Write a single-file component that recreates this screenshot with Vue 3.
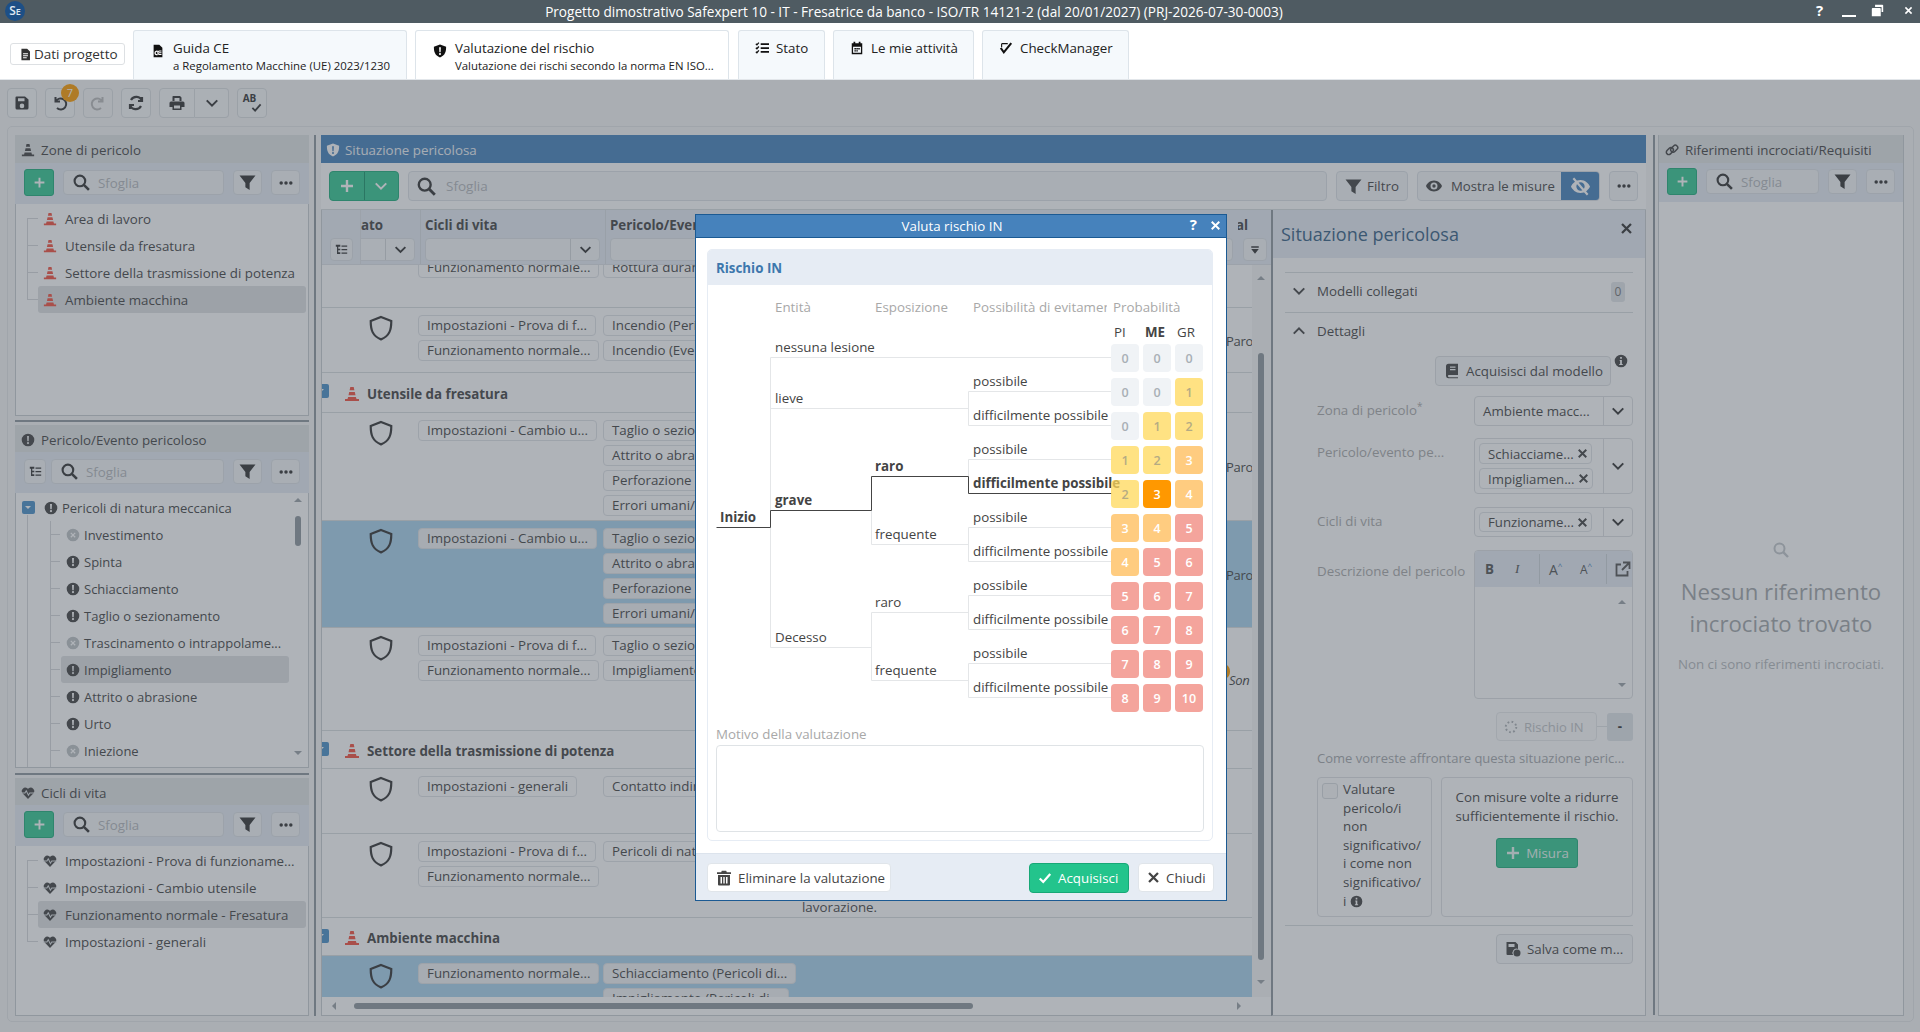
<template>
  <div class="app">
    <svg class="sprite" aria-hidden="true">
      <symbol id="i-save" viewBox="0 0 16 16"><path fill-rule="evenodd" d="M2.500 1.500H11l3.500 3V13a1.500 1.500 0 0 1-1.500 1.500H3A1.500 1.500 0 0 1 1.500 13V2.500a1 1 0 0 1 1-1zM4 3.200v3h6.500v-3zM8 8.600a2.300 2.300 0 1 0 0 4.600 2.300 2.300 0 0 0 0-4.600z" /></symbol>
      <symbol id="i-undo" viewBox="0 0 16 16"><path fill="none" stroke="currentColor" stroke-width="2" d="M3.500 2v4.500H8M3.800 6.500A5.500 5.500 0 1 1 5 13" /></symbol>
      <symbol id="i-redo" viewBox="0 0 16 16"><path fill="none" stroke="currentColor" stroke-width="2" d="M12.500 2v4.500H8M12.200 6.500A5.500 5.500 0 1 0 11 13" /></symbol>
      <symbol id="i-sync" viewBox="0 0 16 16"><path fill="none" stroke="currentColor" stroke-width="2.200" d="M14 2v4h-4M14 6A6 6 0 0 0 3 5M2 14v-4h4M2 10a6 6 0 0 0 11 1" /></symbol>
      <symbol id="i-print" viewBox="0 0 16 16"><path fill-rule="evenodd" d="M4 1h7l1.500 1.500V6h-2V3H5.500v3H3.500V1.500zM2 6.500h12A1.500 1.500 0 0 1 15.500 8v4H12.500v3h-9v-3H.5V8A1.500 1.500 0 0 1 2 6.500zM5 10.500V13.500h6V10.500z" /></symbol>
      <symbol id="i-chev" viewBox="0 0 16 16"><path fill="none" stroke="currentColor" stroke-width="2.300" d="M2 5l6 6 6-6" /></symbol>
      <symbol id="i-chevup" viewBox="0 0 16 16"><path fill="none" stroke="currentColor" stroke-width="2.300" d="M2 11l6-6 6 6" /></symbol>
      <symbol id="i-check" viewBox="0 0 16 16"><path fill="none" stroke="currentColor" stroke-width="2.600" d="M2 8.500l4 4 8-9" /></symbol>
      <symbol id="i-funnel" viewBox="0 0 16 16"><path d="M.5 1.500h15L10 8.500V15l-4-2.500V8.500z" /></symbol>
      <symbol id="i-sort" viewBox="0 0 16 16"><path d="M2 2h12v2.500H2zM2 6.500h12L8 14z" /></symbol>
      <symbol id="i-search" viewBox="0 0 16 16"><circle cx="6.500" cy="6.500" r="5" fill="none" stroke="currentColor" stroke-width="2" /><path stroke="currentColor" stroke-width="2.400" d="M10.200 10.200l4.800 4.800" /></symbol>
      <symbol id="i-dots" viewBox="0 0 16 16"><circle cx="2.500" cy="8" r="2" /><circle cx="8" cy="8" r="2" /><circle cx="13.500" cy="8" r="2" /></symbol>
      <symbol id="i-plus" viewBox="0 0 16 16"><path stroke="currentColor" stroke-width="2.400" d="M8 2v12M2 8h12" /></symbol>
      <symbol id="i-tree" viewBox="0 0 16 16"><path d="M1 2h5.500v2.500H4V7h2.500v2H4v2.500h2.500v2H2.500V4.500H1zM8 3h7v1.500H8zM8 7.300h7v1.500H8zM8 11.600h7v1.500H8z" /></symbol>
      <symbol id="i-cone" viewBox="0 0 16 16"><path d="M6.300 1h3.400l.7 3.300H5.600zM5.200 6h5.600l.7 3.200h-7zM4.100 10.900h7.800l.6 2.100H15v2H1v-2h2.500z" /></symbol>
      <symbol id="i-haz" viewBox="0 0 16 16"><path fill-rule="evenodd" d="M8 .8a7.200 7.200 0 1 0 0 14.400A7.200 7.200 0 0 0 8 .8zM6.900 3.500h2.200l-.3 5.800H7.200zM8 10.200a1.300 1.300 0 1 1 0 2.600 1.300 1.300 0 0 1 0-2.600z" /></symbol>
      <symbol id="i-hazx" viewBox="0 0 16 16"><path fill-rule="evenodd" d="M8 .8a7.200 7.200 0 1 0 0 14.400A7.200 7.200 0 0 0 8 .8zM6 5l2 2 2-2 1 1-2 2 2 2-1 1-2-2-2 2-1-1 2-2-2-2z" /></symbol>
      <symbol id="i-heart" viewBox="0 0 16 16"><path d="M8 14.800 1.700 8.300A4 4 0 0 1 7.300 2.700L8 3.400l.7-.7a4 4 0 0 1 5.600 5.600z" /><path fill="none" stroke="#dfe3e6" stroke-width="1.200" d="M0 8h4.500l1.500-2.500L8.500 10.500 10 8h6" /></symbol>
      <symbol id="i-shield" viewBox="0 0 24 24"><path fill="none" stroke="currentColor" stroke-width="2" d="M12 1.800 21.500 5.500c0 8-1.500 13.800-9.500 17-8-3.200-9.500-9-9.500-17z" /></symbol>
      <symbol id="i-shieldx" viewBox="0 0 16 16"><path fill-rule="evenodd" d="M8 .5 15 3.200c0 5.500-1 9.800-7 12.300C2 13 1 8.700 1 3.200zM7 3.800h2l-.3 5.500H7.300zM8 10.200a1.200 1.200 0 1 1 0 2.400 1.200 1.200 0 0 1 0-2.400z" /></symbol>
      <symbol id="i-doc" viewBox="0 0 16 16"><path fill-rule="evenodd" d="M3 .8h7l3.500 3.500V15H3zM5 6.500v1.200h6V6.500zM5 9v1.200h6V9zM5 11.500v1.200h4.500v-1.200z" /></symbol>
      <symbol id="i-ce" viewBox="0 0 16 16"><path d="M3 .8h6.500l3.500 3.500V15.200H3z" /><path fill="none" stroke="#fff" stroke-width="1.400" d="M7.500 8.400a2 2 0 1 0 0 3.600M12 8H9.800a2 2 0 0 0 0 4H12M9 10h3" /></symbol>
      <symbol id="i-tasks" viewBox="0 0 16 16"><path d="M6.500 2.500H16v2H6.500zM6.500 7H16v2H6.500zM6.500 11.500H16v2H6.500z" /><path fill="none" stroke="currentColor" stroke-width="1.500" d="M1 3.200l1.200 1.200 2.200-2.600M1 7.700l1.200 1.200 2.200-2.600M1 12.200l1.200 1.200 2.200-2.600" /></symbol>
      <symbol id="i-cal" viewBox="0 0 16 16"><path fill-rule="evenodd" d="M4 .8h2V2.500h4V.8h2V2.500h2V15H2V2.500h2zM3.500 6.500V13.500h9V6.500zM5 8h1.800v1.600H5zM7.200 8H9v1.600H7.200zM9.400 8h1.800v1.600H9.400zM5 10.500h1.800v1.600H5zM7.200 10.500H9v1.600H7.200z" /></symbol>
      <symbol id="i-cm" viewBox="0 0 16 16"><path fill="none" stroke="currentColor" stroke-width="2.400" d="M2 8l3.500 5L14 2.500" /><path fill="none" stroke="currentColor" stroke-width="1.300" d="M3 3h7M3 3v4" /></symbol>
      <symbol id="i-eye" viewBox="0 0 16 16"><path fill-rule="evenodd" d="M8 2.500C4 2.500 1 5.500 0 8c1 2.500 4 5.500 8 5.500s7-3 8-5.500c-1-2.500-4-5.500-8-5.500zM8 4.500a3.500 3.500 0 1 1 0 7 3.500 3.500 0 0 1 0-7zM8 6.300a1.700 1.700 0 1 0 0 3.400 1.700 1.700 0 0 0 0-3.400z" /></symbol>
      <symbol id="i-eyex" viewBox="0 0 16 16"><path fill-rule="evenodd" d="M8 2.500C4 2.500 1 5.500 0 8c1 2.500 4 5.500 8 5.500s7-3 8-5.500c-1-2.500-4-5.500-8-5.500zM8 4.500a3.500 3.500 0 1 1 0 7 3.500 3.500 0 0 1 0-7z" /><path stroke="currentColor" stroke-width="1.800" d="M2 1l12 14" /></symbol>
      <symbol id="i-link" viewBox="0 0 16 16"><g fill="none" stroke="currentColor" stroke-width="1.700"><rect x="1" y="6.500" width="9" height="5.500" rx="2.700" transform="rotate(-45 5.500 9.200)" /><rect x="6" y="3.800" width="9" height="5.500" rx="2.700" transform="rotate(-45 10.500 6.500)" /></g></symbol>
      <symbol id="i-book" viewBox="0 0 16 16"><path fill-rule="evenodd" d="M4.500 .8H14V12H5a1 1 0 0 0 0 2.200h9v1H4.500A2.500 2.500 0 0 1 2 13V3.300A2.500 2.500 0 0 1 4.500 .8zM6 3.500v1.200h5.500V3.500zM6 6v1.200h5.500V6z" /></symbol>
      <symbol id="i-info" viewBox="0 0 16 16"><path fill-rule="evenodd" d="M8 .8a7.200 7.200 0 1 0 0 14.400A7.200 7.200 0 0 0 8 .8zM7 3.500h2v2H7zM6.500 6.800H9v4.500h1v1.200H6v-1.200h1V8H6.500z" /></symbol>
      <symbol id="i-trash" viewBox="0 0 16 16"><path fill-rule="evenodd" d="M5.800 .8h4.400l.6 1.400H15V4H1V2.200h4.200zM2 5h12v9.500a1 1 0 0 1-1 1H3a1 1 0 0 1-1-1zM4.500 7v6.500H6V7zM7.300 7v6.500h1.400V7zM10 7v6.500h1.500V7z" /></symbol>
      <symbol id="i-x" viewBox="0 0 16 16"><path stroke="currentColor" stroke-width="2.800" d="M2.500 2.500l11 11M13.500 2.500l-11 11" /></symbol>
      <symbol id="i-ext" viewBox="0 0 16 16"><path fill="none" stroke="currentColor" stroke-width="1.800" d="M12.500 10v4.500h-11v-11H6M8 1.500h6.500V8M14 2L7 9" /></symbol>
      <symbol id="i-saveas" viewBox="0 0 16 16"><path fill-rule="evenodd" d="M1.500 1h9L13 3.500V8a4 4 0 0 0-4.800 6H2.500a1 1 0 0 1-1-1zM3.500 3v3h6V3z" /><circle cx="12" cy="12" r="3.500" /></symbol>
      <symbol id="i-restore" viewBox="0 0 16 16"><path d="M5 .8h9a1 1 0 0 1 1 1v8h-2V3.800H5zM2 5h9a1 1 0 0 1 1 1v9H1V6a1 1 0 0 1 1-1z" /></symbol>
      <symbol id="i-spin" viewBox="0 0 16 16"><circle cx="8" cy="8" r="6" fill="none" stroke="currentColor" stroke-width="2.200" stroke-dasharray="2 2.700" /></symbol>
    </svg>

    <header class="titlebar">
      <span class="logo">S<small>E</small></span>
      <span class="title">Progetto dimostrativo Safexpert 10 - IT - Fresatrice da banco - ISO/TR 14121-2 (dal 20/01/2027) (PRJ-2026-07-30-0003)</span>
      <span class="win-btns">
        <span class="win-q">?</span>
        <span class="win-min"></span>
        <svg class="ic win-res"><use href="#i-restore" /></svg>
        <svg class="ic win-x"><use href="#i-x" /></svg>
      </span>
    </header>

    <nav class="tabs">
      <button class="project-btn"><svg class="ic ic13"><use href="#i-doc" /></svg>Dati progetto</button>
      <div v-for="tab in tabs" :key="tab.title" class="tab" :class="{ white: tab.white, flat: !tab.sub }" :style="{ width: tab.w + 'px' }">
        <svg class="ic ic14 tab-ic"><use :href="tab.icon" /></svg>
        <div class="tab-text">
          <div class="tab-title">{{ tab.title }}</div>
          <div v-if="tab.sub" class="tab-sub">{{ tab.sub }}</div>
        </div>
      </div>
    </nav>

    <div class="workspace">
      <div class="main-toolbar">
        <button class="tool"><svg class="ic ic16"><use href="#i-save" /></svg></button>
        <button class="tool badged">
          <svg class="ic ic16"><use href="#i-undo" /></svg>
          <span class="badge">7</span>
        </button>
        <button class="tool off"><svg class="ic ic16"><use href="#i-redo" /></svg></button>
        <button class="tool"><svg class="ic ic16"><use href="#i-sync" /></svg></button>
        <div class="tool-group">
          <button class="tool print"><svg class="ic ic16"><use href="#i-print" /></svg></button>
          <button class="tool caret"><svg class="ic ic14"><use href="#i-chev" /></svg></button>
        </div>
        <button class="tool spell">
          <span class="spell-ab">AB</span>
          <svg class="ic spell-ck"><use href="#i-check" /></svg>
        </button>
      </div>

      <main class="board">
        <div class="left-col">
          <section class="side-panel p-zones">
            <h3 class="side-head"><svg class="ic ic14"><use href="#i-cone" /></svg>Zone di pericolo</h3>
            <div class="side-tools">
              <button class="add"><svg class="ic ic13"><use href="#i-plus" /></svg></button>
              <div class="search"><svg class="ic ic17"><use href="#i-search" /></svg><span>Sfoglia</span></div>
              <button class="mini funnel"><svg class="ic ic17"><use href="#i-funnel" /></svg></button>
              <button class="mini"><svg class="ic ic14"><use href="#i-dots" /></svg></button>
            </div>
            <ul class="tree tree-flat">
              <li v-for="z in zones" :key="z" :class="{ sel: z === 'Ambiente macchina' }">
                <svg class="ic ic14 red"><use href="#i-cone" /></svg>{{ z }}
              </li>
            </ul>
          </section>

          <section class="side-panel p-hazards">
            <h3 class="side-head"><svg class="ic ic14"><use href="#i-haz" /></svg>Pericolo/Evento pericoloso</h3>
            <div class="side-tools">
              <button class="mini tree-btn"><svg class="ic ic13"><use href="#i-tree" /></svg></button>
              <div class="search"><svg class="ic ic17"><use href="#i-search" /></svg><span>Sfoglia</span></div>
              <button class="mini funnel"><svg class="ic ic17"><use href="#i-funnel" /></svg></button>
              <button class="mini"><svg class="ic ic14"><use href="#i-dots" /></svg></button>
            </div>
            <div class="haz-list">
              <div class="haz-root">
                <span class="toggle"></span>
                <svg class="ic ic14"><use href="#i-haz" /></svg>Pericoli di natura meccanica
              </div>
              <ul class="haz-items">
                <li v-for="h in hazards" :key="h.name" :class="{ sel: h.sel }">
                  <svg class="ic ic14" :class="{ grey: h.off }"><use :href="h.off ? '#i-hazx' : '#i-haz'" /></svg>{{ h.name }}
                </li>
              </ul>
              <div class="vscroll">
                <span class="arr up"></span>
                <span class="thumb"></span>
                <span class="arr down"></span>
              </div>
            </div>
          </section>

          <section class="side-panel p-cycles">
            <h3 class="side-head"><svg class="ic ic14"><use href="#i-heart" /></svg>Cicli di vita</h3>
            <div class="side-tools">
              <button class="add"><svg class="ic ic13"><use href="#i-plus" /></svg></button>
              <div class="search"><svg class="ic ic17"><use href="#i-search" /></svg><span>Sfoglia</span></div>
              <button class="mini funnel"><svg class="ic ic17"><use href="#i-funnel" /></svg></button>
              <button class="mini"><svg class="ic ic14"><use href="#i-dots" /></svg></button>
            </div>
            <ul class="tree tree-flat cycles">
              <li v-for="c in cycles" :key="c" :class="{ sel: c.startsWith('Funz') }">
                <svg class="ic ic14"><use href="#i-heart" /></svg>{{ c }}
              </li>
            </ul>
          </section>
        </div>

        <section class="center-col">
          <h3 class="center-head"><svg class="ic ic14"><use href="#i-shieldx" /></svg>Situazione pericolosa</h3>
          <div class="center-tools">
            <div class="add-group">
              <button><svg class="ic ic16"><use href="#i-plus" /></svg></button>
              <button><svg class="ic ic14"><use href="#i-chev" /></svg></button>
            </div>
            <div class="search big"><svg class="ic ic19"><use href="#i-search" /></svg><span>Sfoglia</span></div>
            <button class="mini filter"><svg class="ic ic17"><use href="#i-funnel" /></svg>Filtro</button>
            <div class="measures">
              <span class="m-label"><svg class="ic ic16"><use href="#i-eye" /></svg>Mostra le misure</span>
              <span class="m-on"><svg class="ic ic19"><use href="#i-eyex" /></svg></span>
            </div>
            <button class="mini"><svg class="ic ic14"><use href="#i-dots" /></svg></button>
          </div>

          <div class="center-body">
            <div class="grid-area">
              <div class="grid-head">
                <div class="gh pin">
                  <button class="mini small"><svg class="ic ic13"><use href="#i-tree" /></svg></button>
                </div>
                <div class="gh state">
                  <b class="gh-clip">ato</b>
                  <div class="gh-sel"><i></i><span class="gh-caret"><svg class="ic ic13"><use href="#i-chev" /></svg></span></div>
                </div>
                <div class="gh cyc">
                  <b>Cicli di vita</b>
                  <div class="gh-sel"><i></i><span class="gh-caret"><svg class="ic ic13"><use href="#i-chev" /></svg></span></div>
                </div>
                <div class="gh haz">
                  <b>Pericolo/Evento pericoloso</b>
                  <div class="gh-sel"><i></i></div>
                </div>
                <div class="gh last">
                  <b class="gh-al">al</b>
                  <button class="mini tiny">
                    <svg class="ic ic13"><use href="#i-sort" /></svg>
                  </button>
                </div>
              </div>

              <div class="grid-main">
                <div class="grid-rows">
                  <template v-for="(r, i) in rows" :key="i">
                    <div v-if="r.group" class="group-row" :style="{ height: r.h + 'px' }">
                      <span class="toggle cut"></span>
                      <svg class="ic ic16 red"><use href="#i-cone" /></svg>
                      <b>{{ r.group }}</b>
                    </div>
                    <div v-else class="data-row" :class="{ picked: r.picked, first: i === 0 }" :style="{ height: r.h + 'px' }">
                      <div class="shield-cell"><svg v-if="i" class="ic shield"><use href="#i-shield" /></svg></div>
                      <div class="chips"><span v-for="c in r.cyc" :key="c" class="chip">{{ c }}</span></div>
                      <div class="chips"><span v-for="c in r.haz" :key="c" class="chip">{{ c }}</span></div>
                      <div class="desc"><span v-if="r.desc">{{ r.desc }}</span></div>
                      <div class="status">
                        <i v-if="r.dot" class="dot"></i>
                        <em v-if="r.em">{{ r.em }}</em>
                        <template v-else>{{ r.status }}</template>
                      </div>
                    </div>
                  </template>
                </div>
                <div class="vscroll grid-v">
                  <span class="arr up"></span>
                  <span class="thumb"></span>
                  <span class="arr down"></span>
                </div>
              </div>

              <div class="hscroll">
                <span class="arr left"></span>
                <span class="hthumb"></span>
                <span class="arr right"></span>
              </div>
            </div>

            <aside class="detail">
              <div class="detail-head">
                <span>Situazione pericolosa</span>
                <svg class="ic ic13"><use href="#i-x" /></svg>
              </div>
              <div class="detail-body">
                <div class="acc first-acc">
                  <svg class="ic ic14"><use href="#i-chev" /></svg>
                  <span>Modelli collegati</span>
                  <em class="count">0</em>
                </div>
                <div class="acc">
                  <svg class="ic ic14"><use href="#i-chevup" /></svg>
                  <span>Dettagli</span>
                </div>

                <div class="from-model">
                  <button class="btn-line"><svg class="ic ic16"><use href="#i-book" /></svg>Acquisisci dal modello</button>
                  <svg class="ic ic14 info"><use href="#i-info" /></svg>
                </div>

                <div class="frow f1">
                  <label>Zona di pericolo<sup>*</sup></label>
                  <div class="combo">
                    <div class="combo-val plain">Ambiente macc...</div>
                    <span class="combo-btn"><svg class="ic ic14"><use href="#i-chev" /></svg></span>
                  </div>
                </div>
                <div class="frow f2">
                  <label>Pericolo/evento pe...</label>
                  <div class="combo">
                    <div class="combo-val">
                      <span class="tag">Schiacciame...<svg class="ic"><use href="#i-x" /></svg></span>
                      <span class="tag">Impigliamen...<svg class="ic"><use href="#i-x" /></svg></span>
                    </div>
                    <span class="combo-btn"><svg class="ic ic14"><use href="#i-chev" /></svg></span>
                  </div>
                </div>
                <div class="frow f3">
                  <label>Cicli di vita</label>
                  <div class="combo">
                    <div class="combo-val">
                      <span class="tag">Funzioname...<svg class="ic"><use href="#i-x" /></svg></span>
                    </div>
                    <span class="combo-btn"><svg class="ic ic14"><use href="#i-chev" /></svg></span>
                  </div>
                </div>
                <div class="frow f4">
                  <label>Descrizione del pericolo</label>
                  <div class="editor">
                    <div class="ed-tools">
                      <span class="ed-b">B</span><span class="ed-i">I</span><i class="sep"></i>
                      <span class="ed-a">A<sup>^</sup></span><span class="ed-a2">A<sup>^</sup></span><i class="sep"></i>
                      <svg class="ic ic16"><use href="#i-ext" /></svg>
                    </div>
                    <div class="ed-area">
                      <span class="arr up"></span>
                      <span class="arr down"></span>
                    </div>
                  </div>
                </div>

                <div class="risk-row">
                  <button class="risk-btn"><svg class="ic ic14"><use href="#i-spin" /></svg>Rischio IN</button>
                  <i class="risk-link"></i>
                  <span class="risk-val">-</span>
                </div>

                <p class="how">Come vorreste affrontare questa situazione peric...</p>
                <div class="how-boxes">
                  <div class="how-a">
                    <span class="cb"></span>
                    <span>Valutare<br>pericolo/i<br>non<br>significativo/<br>i come non<br>significativo/<br>i <svg class="ic ic13 inl"><use href="#i-info" /></svg></span>
                  </div>
                  <div class="how-b">
                    <p>Con misure volte a ridurre sufficientemente il rischio.</p>
                    <button class="misura"><svg class="ic ic16"><use href="#i-plus" /></svg>Misura</button>
                  </div>
                </div>
                <div class="save-row">
                  <button class="btn-line"><svg class="ic ic16"><use href="#i-saveas" /></svg>Salva come m...</button>
                </div>
              </div>
            </aside>
          </div>
        </section>

        <section class="right-col">
          <h3 class="side-head"><svg class="ic ic14"><use href="#i-link" /></svg>Riferimenti incrociati/Requisiti</h3>
          <div class="side-tools">
            <button class="add"><svg class="ic ic13"><use href="#i-plus" /></svg></button>
            <div class="search"><svg class="ic ic17"><use href="#i-search" /></svg><span>Sfoglia</span></div>
            <button class="mini funnel"><svg class="ic ic17"><use href="#i-funnel" /></svg></button>
            <button class="mini"><svg class="ic ic14"><use href="#i-dots" /></svg></button>
          </div>
          <div class="empty">
            <svg class="ic ic16"><use href="#i-search" /></svg>
            <h4>Nessun riferimento incrociato trovato</h4>
            <p>Non ci sono riferimenti incrociati.</p>
          </div>
        </section>
      </main>
    </div>

    <div class="scrim"></div>

    <div class="modal">
      <div class="modal-title">
        <span>Valuta rischio IN</span>
        <span class="modal-q">?</span>
        <svg class="ic"><use href="#i-x" /></svg>
      </div>
      <div class="modal-body">
        <div class="risk-card">
          <div class="risk-head">Rischio IN</div>
          <div class="risk-tree">
            <svg class="tree-lines" width="506" height="430">
              <path class="ln" :d="lightLines" />
              <path class="ln dark" :d="darkLines" />
            </svg>
            <span v-for="h in columns" :key="h.t" class="col-h" :style="{ left: h.x + 'px', width: h.w + 'px' }">{{ h.t }}</span>
            <span v-for="p in probs" :key="p.t" class="prob-h" :class="{ on: p.on }" :style="{ left: p.x + 'px' }">{{ p.t }}</span>
            <span v-for="(n, i) in nodes" :key="i" class="node" :class="{ on: n.on }" :style="{ left: n.x + 'px', top: n.y + 'px' }">{{ n.t }}</span>
            <div class="matrix">
              <span v-for="(c, i) in matrix" :key="i" class="cell" :class="cellClass(c, i)">{{ c }}</span>
            </div>
          </div>
          <label class="motive-label">Motivo della valutazione</label>
          <div class="motive"></div>
        </div>
      </div>
      <div class="modal-foot">
        <button class="foot-btn"><svg class="ic ic16"><use href="#i-trash" /></svg>Eliminare la valutazione</button>
        <button class="foot-btn ok"><svg class="ic ic14"><use href="#i-check" /></svg>Acquisisci</button>
        <button class="foot-btn close"><svg class="ic ic13"><use href="#i-x" /></svg>Chiudi</button>
      </div>
    </div>
  </div>
</template>

<script setup>
const tabs = [
  { title: 'Guida CE', sub: 'a Regolamento Macchine (UE) 2023/1230', icon: '#i-ce', w: 274 },
  { title: 'Valutazione del rischio', sub: 'Valutazione dei rischi secondo la norma EN ISO...', icon: '#i-shieldx', w: 314, white: true },
  { title: 'Stato', icon: '#i-tasks', w: 87 },
  { title: 'Le mie attività', icon: '#i-cal', w: 141 },
  { title: 'CheckManager', icon: '#i-cm', w: 147 }
]

const zones = ['Area di lavoro', 'Utensile da fresatura', 'Settore della trasmissione di potenza', 'Ambiente macchina']

const hazards = [
  { name: 'Investimento', off: true },
  { name: 'Spinta' },
  { name: 'Schiacciamento' },
  { name: 'Taglio o sezionamento' },
  { name: 'Trascinamento o intrappolame...', off: true },
  { name: 'Impigliamento', sel: true },
  { name: 'Attrito o abrasione' },
  { name: 'Urto' },
  { name: 'Iniezione', off: true }
]

const cycles = ['Impostazioni - Prova di funzioname...', 'Impostazioni - Cambio utensile', 'Funzionamento normale - Fresatura', 'Impostazioni - generali']

const rows = [
  { h: 43, cyc: ['Funzionamento normale...'], haz: ['Rottura durante il funzionamento'] },
  { h: 65, cyc: ['Impostazioni - Prova di f...', 'Funzionamento normale...'], haz: ['Incendio (Pericoli di natura', 'Incendio (Eventi pericolosi'], status: 'Paro' },
  { group: 'Utensile da fresatura', h: 40 },
  { h: 108, cyc: ['Impostazioni - Cambio u...'], haz: ['Taglio o sezionamento', 'Attrito o abrasione', 'Perforazione o puntura', 'Errori umani/Uso errato'], status: 'Paro' },
  { h: 107, picked: true, cyc: ['Impostazioni - Cambio u...'], haz: ['Taglio o sezionamento', 'Attrito o abrasione', 'Perforazione o puntura', 'Errori umani/Uso errato'], status: 'Paro' },
  { h: 103, cyc: ['Impostazioni - Prova di f...', 'Funzionamento normale...'], haz: ['Taglio o sezionamento', 'Impigliamento (Pericoli di'], em: 'Son', dot: true },
  { group: 'Settore della trasmissione di potenza', h: 38 },
  { h: 65, cyc: ['Impostazioni - generali'], haz: ['Contatto indiretto'] },
  { h: 84, cyc: ['Impostazioni - Prova di f...', 'Funzionamento normale...'], haz: ['Pericoli di natura meccanica'], desc: 'lavorazione.' },
  { group: 'Ambiente macchina', h: 38 },
  { h: 60, picked: true, cyc: ['Funzionamento normale...'], haz: ['Schiacciamento (Pericoli di...', 'Impigliamento (Pericoli di...'] }
]

// tree coordinates are relative to the card's body
const ox = 708
const oy = 285
const seg = (x1, y1, x2, y2) => `M${x1 - ox + 0.5} ${y1 - oy + 0.5}L${x2 - ox + 0.5} ${y2 - oy + 0.5}`

const light = [
  [770, 357, 1111, 357], [770, 357, 770, 647],
  [770, 408, 968, 408], [968, 391, 968, 425], [968, 391, 1111, 391], [968, 425, 1111, 425],
  [968, 459, 968, 476], [968, 459, 1111, 459],
  [871, 510, 871, 544], [871, 544, 968, 544], [968, 527, 968, 561], [968, 527, 1111, 527], [968, 561, 1111, 561],
  [770, 647, 871, 647], [871, 612, 871, 680], [871, 612, 968, 612], [871, 680, 968, 680],
  [968, 595, 968, 629], [968, 595, 1111, 595], [968, 629, 1111, 629],
  [968, 663, 968, 697], [968, 663, 1111, 663], [968, 697, 1111, 697]
]
const dark = [
  [716, 527, 770, 527], [770, 510, 770, 527], [770, 510, 871, 510],
  [871, 476, 871, 510], [871, 476, 968, 476], [968, 476, 968, 493], [968, 493, 1111, 493]
]
const lightLines = light.map((s) => seg(...s)).join('')
const darkLines = dark.map((s) => seg(...s)).join('')

const columns = [
  { t: 'Entità', x: 67, w: 90 },
  { t: 'Esposizione', x: 167, w: 90 },
  { t: 'Possibilità di evitamento', x: 265, w: 134 },
  { t: 'Probabilità', x: 405, w: 90 }
]
const probs = [
  { t: 'PI', x: 406 },
  { t: 'ME', x: 437, on: true },
  { t: 'GR', x: 469 }
]

const node = (t, x, line, on) => ({ t, x: x - ox, y: line - oy - 20, on })
const nodes = [
  node('nessuna lesione', 775, 357),
  node('lieve', 775, 408),
  node('grave', 775, 510, true),
  node('Decesso', 775, 647),
  node('Inizio', 720, 527, true),
  node('raro', 875, 476, true),
  node('frequente', 875, 544),
  node('raro', 875, 612),
  node('frequente', 875, 680),
  node('possibile', 973, 391),
  node('difficilmente possibile', 973, 425),
  node('possibile', 973, 459),
  node('difficilmente possibile', 973, 493, true),
  node('possibile', 973, 527),
  node('difficilmente possibile', 973, 561),
  node('possibile', 973, 595),
  node('difficilmente possibile', 973, 629),
  node('possibile', 973, 663),
  node('difficilmente possibile', 973, 697)
]

const matrix = [0, 0, 0, 0, 0, 1, 0, 1, 2, 1, 2, 3, 2, 3, 4, 3, 4, 5, 4, 5, 6, 5, 6, 7, 6, 7, 8, 7, 8, 9, 8, 9, 10]
const cellClass = (v, i) => {
  if (i === 13) return 'hot'
  if (v === 0) return 'none'
  if (v <= 2) return 'low'
  if (v <= 4) return 'mid'
  return 'high'
}
</script>

<style>
html, body { margin: 0; height: 100%; overflow: hidden; background: #fff; }
</style>

<style scoped>
* { box-sizing: border-box; }
.app {
  position: relative;
  height: 1032px;
  width: 1920px;
  overflow: hidden;
  display: flex;
  flex-direction: column;
  font-family: "Open Sans", sans-serif;
  font-size: 13.33px;
  color: #333;
}
button { font: inherit; color: inherit; cursor: default; }
ul { list-style: none; margin: 0; padding: 0; }
h3, h4, p { margin: 0; font-weight: 400; }
.sprite { display: none; }
.ic { display: inline-block; flex: none; fill: currentColor; }
.ic10 { width: 10px; height: 10px; }
.ic13 { width: 13px; height: 13px; }
.ic14 { width: 14px; height: 14px; }
.ic16 { width: 16px; height: 16px; }
.ic17 { width: 17px; height: 17px; }
.ic19 { width: 19px; height: 19px; }

/* title bar */
.titlebar {
  height: 23px;
  background: #4f5b62;
  color: #fff;
  display: flex;
  align-items: center;
  justify-content: center;
  padding-right: 92px;
  font-size: 13.6px;
  flex: none;
  position: relative;
}
.logo {
  position: absolute;
  left: 5px;
  top: 1px;
  width: 20px;
  height: 20px;
  border-radius: 50%;
  background: #1d4f86;
  color: #dfe8f2;
  font-size: 12px;
  font-weight: 600;
  text-align: center;
  line-height: 20px;
}
.logo small { font-size: 9px; }
.win-btns {
  position: absolute;
  right: 0;
  top: 0;
  height: 23px;
  width: 112px;
}
.win-q { position: absolute; left: 8px; top: 0; font-weight: 700; font-size: 15px; }
.win-min { position: absolute; left: 34px; top: 15px; width: 14px; height: 2px; background: #fff; }
.win-res { position: absolute; left: 63px; top: 4px; width: 13px; height: 13px; }
.win-x { position: absolute; left: 96px; top: 6px; width: 9px; height: 9px; }

/* tabs */
.tabs {
  height: 57px;
  flex: none;
  background: #fff;
  display: flex;
  align-items: flex-end;
  padding-left: 10px;
  border-bottom: 1px solid #e2e6ea;
}
.project-btn {
  height: 22px;
  width: 115px;
  margin: 0 8px 14px 0;
  padding: 0 0 0 8px;
  display: flex;
  align-items: center;
  gap: 2px;
  background: #fff;
  border: 1px solid #dde0e3;
  border-radius: 3px;
  font-size: 13.5px;
}
.tab {
  height: 49px;
  margin-right: 8px;
  background: #f5f9fc;
  border: 1px solid #dde4ea;
  border-bottom: 0;
  border-radius: 3px 3px 0 0;
  display: flex;
  align-items: flex-start;
  padding: 7px 0 0 17px;
  gap: 8px;
  flex: none;
}
.tab.white { background: #fff; margin-right: 9px; }
.tab-ic { margin-top: 6px; color: #111; }
.tab-title { font-size: 13.33px; line-height: 18px; color: #222; padding-top: 1px; }
.tab-sub { font-size: 11.4px; line-height: 17px; color: #222; white-space: nowrap; }
.tab.flat { padding-left: 16px; gap: 7px; }
.tab.flat .tab-ic { margin-top: 3px; }

/* workspace */
.workspace {
  flex: 1;
  min-height: 0;
  background: #f7f7f7;
  padding: 8px 6px 10px 7px;
  display: flex;
  flex-direction: column;
}
.main-toolbar {
  height: 30px;
  display: flex;
  gap: 8px;
  margin-bottom: 8px;
  flex: none;
}
.tool {
  width: 30px;
  height: 30px;
  background: #f8f9fa;
  border: 1px solid #dcdfe2;
  border-radius: 4px;
  padding: 0;
  display: flex;
  align-items: center;
  justify-content: center;
  position: relative;
}
.tool.off { color: #bbb; background: #f7f7f7; }
.tool-group { display: flex; }
.tool.print { width: 36px; border-radius: 4px 0 0 4px; }
.tool.caret { width: 34px; border-left: 0; border-radius: 0 4px 4px 0; }
.badge {
  position: absolute;
  left: 15px;
  top: -5px;
  width: 18px;
  height: 18px;
  border-radius: 50%;
  background: #ff9d00;
  color: #fff;
  font-size: 11px;
  line-height: 18px;
  text-align: center;
}
.spell { flex-direction: column; }
.spell-ab { font-size: 10px; font-weight: 700; line-height: 10px; margin-left: -5px; }
.spell-ck { width: 11px; height: 11px; margin: -1px 0 0 8px; }

.board {
  flex: 1;
  min-height: 0;
  border: 1px solid #e4e6e8;
  border-radius: 5px;
  padding: 8px 9px 5px 7px;
  display: flex;
}

/* left column */
.left-col {
  width: 294px;
  flex: none;
  display: flex;
  flex-direction: column;
}
.side-panel { display: flex; flex-direction: column; flex: none; border-bottom: 1px solid #c9ced2; }
.p-zones { height: 281px; }
.p-hazards { height: 343px; margin-top: 9px; position: relative; }
.p-cycles { height: 238px; margin-top: 10px; position: relative; }
.p-hazards::before, .p-cycles::before {
  content: "";
  position: absolute;
  left: 0;
  right: 0;
  top: -5px;
  height: 2px;
  background: #8f989e;
}
.side-head {
  height: 28px;
  flex: none;
  background: #e2e4e4;
  display: flex;
  align-items: center;
  gap: 6px;
  padding: 2px 0 0 6px;
  font-size: 13.33px;
  color: #444;
}
.p-hazards .side-head, .p-cycles .side-head { height: 27px; }
.side-tools {
  height: 41px;
  flex: none;
  background: #e6ecf4;
  display: flex;
  align-items: center;
  padding: 0 9px 2px;
  gap: 9px;
}
.add {
  width: 30px;
  height: 27px;
  padding: 0;
  background: #33c992;
  border: 1px solid #1fae7c;
  border-radius: 3px;
  color: #fff;
  display: flex;
  align-items: center;
  justify-content: center;
}
.search {
  flex: 1;
  min-width: 0;
  height: 25px;
  background: #f4f6f8;
  border: 1px solid #dde2e7;
  border-radius: 4px;
  display: flex;
  align-items: center;
  gap: 8px;
  padding-left: 9px;
  color: #b4b8bc;
}
.search .ic { color: #333; }
.mini {
  flex: none;
  width: 29px;
  height: 25px;
  padding: 0;
  background: #f4f6f8;
  border: 1px solid #dde2e7;
  border-radius: 4px;
  display: flex;
  align-items: center;
  justify-content: center;
}
.tree-btn { width: 22px; margin-right: -4px; }
.tree {
  flex: 1;
  background: #fff;
  border-left: 1px solid #c9ced2;
  border-right: 1px solid #c9ced2;
  padding: 1px 2px 0 22px;
  position: relative;
}
.tree-flat { padding-top: 1px; }
.tree-flat::before {
  content: "";
  position: absolute;
  left: 11px;
  top: 15px;
  height: 81px;
  border-left: 1px solid #d6d9dc;
}
.tree li {
  height: 27px;
  display: flex;
  align-items: center;
  gap: 8px;
  padding-left: 5px;
  position: relative;
  white-space: nowrap;
  color: #444;
  border-radius: 3px;
}
.tree li::before {
  content: "";
  position: absolute;
  left: -11px;
  width: 11px;
  top: 13px;
  border-top: 1px solid #d6d9dc;
}
.tree li.sel { background: #dfe1e3; }
.red { color: #f4503f; }
.grey { color: #bfc3c6; }
.cycles li { gap: 8px; padding-left: 5px; }

.haz-list {
  flex: 1;
  position: relative;
  background: #fff;
  border-left: 1px solid #c9ced2;
  border-right: 1px solid #c9ced2;
  overflow: hidden;
  padding-left: 6px;
  font-size: 13px;
}
.haz-root {
  height: 27px;
  display: flex;
  align-items: center;
  margin-top: 1px;
  gap: 4px;
  color: #444;
}
.toggle {
  width: 13px;
  height: 13px;
  background: #4a90c8;
  border-radius: 2px;
  margin-right: 5px;
  position: relative;
  flex: none;
}
.toggle::after {
  content: "";
  position: absolute;
  left: 3px;
  top: 5px;
  border: 3.5px solid transparent;
  border-top-color: #fff;
}
.haz-list > .haz-root .toggle { margin-right: 5px; }
.haz-items { margin-left: 39px; width: 228px; position: relative; }
.haz-items li {
  height: 27px;
  display: flex;
  align-items: center;
  gap: 4px;
  padding-left: 5px;
  color: #444;
  white-space: nowrap;
  position: relative;
  border-radius: 3px;
}
.haz-items li::before {
  content: "";
  position: absolute;
  left: -11px;
  width: 10px;
  top: 13px;
  border-top: 1px solid #d6d9dc;
}
.haz-items::before {
  content: "";
  position: absolute;
  left: -11px;
  top: 0;
  bottom: -10px;
  border-left: 1px solid #d6d9dc;
}
.haz-list::before {
  content: "";
  position: absolute;
  left: 11px;
  top: 22px;
  bottom: 0;
  border-left: 1px solid #d6d9dc;
}
.haz-items li.sel { background: #dfe1e3; }
.vscroll {
  position: absolute;
  right: 7px;
  top: 0;
  bottom: 0;
  width: 6px;
}
.vscroll .thumb {
  position: absolute;
  left: 0;
  right: 0;
  top: 23px;
  height: 30px;
  border-radius: 3px;
  background: #8f989e;
}
.arr { position: absolute; width: 0; height: 0; border: 4px solid transparent; }
.arr.up { border-bottom-color: #9ba2a7; top: 5px; left: -1px; border-top-width: 0; }
.arr.down { border-top-color: #9ba2a7; bottom: 12px; left: -1px; border-bottom-width: 0; }
.arr.left { border-right-color: #9ba2a7; border-left-width: 0; left: 10px; top: 5px; }
.arr.right { border-left-color: #9ba2a7; border-right-width: 0; right: 30px; top: 5px; }

/* center */
.center-col {
  width: 1325px;
  margin-left: 12px;
  flex: none;
  display: flex;
  flex-direction: column;
  position: relative;
}
.center-col::before {
  content: "";
  position: absolute;
  left: -7px;
  top: 0;
  bottom: 0;
  width: 2px;
  background: #8f989e;
}
.center-head {
  height: 28px;
  flex: none;
  background: #4682bc;
  color: #f0f4f8;
  display: flex;
  align-items: center;
  gap: 5px;
  padding: 2px 0 0 5px;
  font-size: 13.33px;
}
.center-head .ic { color: #fff; }
.center-tools {
  height: 47px;
  flex: none;
  background: #fff;
  display: flex;
  align-items: center;
  padding: 0 8px;
  border-bottom: 1px solid #d9dde0;
  gap: 9px;
}
.add-group {
  display: flex;
  height: 30px;
  width: 70px;
  border: 1px solid #1fae7c;
  border-radius: 4px;
  background: #33c992;
  color: #fff;
  flex: none;
}
.add-group button {
  flex: 1;
  background: none;
  border: 0;
  padding: 0;
  color: #fff;
  display: flex;
  align-items: center;
  justify-content: center;
}
.add-group button + button { border-left: 1px solid #17946a; }
.search.big { height: 30px; padding-left: 8px; gap: 10px; font-size: 13.5px; }
.mini.filter {
  width: 72px;
  height: 30px;
  gap: 5px;
  font-size: 13.33px;
  color: #444;
}
.center-tools > .mini { height: 30px; }
.measures {
  width: 183px;
  height: 30px;
  display: flex;
  border: 1px solid #dde2e7;
  border-radius: 4px;
  background: #f4f6f8;
  flex: none;
  overflow: hidden;
}
.m-label { flex: 1; display: flex; align-items: center; gap: 9px; padding-left: 8px; font-size: 13.2px; color: #444; white-space: nowrap; }
.m-on {
  width: 38px;
  background: #4682bc;
  color: #fff;
  display: flex;
  align-items: center;
  justify-content: center;
}
.center-body { flex: 1; min-height: 0; display: flex; border-left: 1px solid #c9ced2; }

.grid-area {
  width: 949px;
  flex: none;
  display: flex;
  flex-direction: column;
  position: relative;
}
.grid-head {
  height: 55px;
  flex: none;
  background: #e6ecf4;
  display: flex;
  border-bottom: 1px solid #dde2e7;
}
.gh { position: relative; flex: none; overflow: hidden; }
.gh b { display: block; line-height: 30px; font-weight: 700; color: #444; white-space: nowrap; padding-left: 4px; }
.gh.pin { width: 39px; border-right: 1px solid #dde2e7; padding: 28px 0 0 8px; background: #e8edf4; }
.mini.small { width: 23px; height: 23px; }
.gh.state { width: 60px; border-right: 1px solid #d9dee3; }
.gh-clip { padding-left: 0 !important; }
.gh.cyc { width: 185px; border-right: 1px solid #d9dee3; }
.gh.haz { width: 632px; }
.gh.last { flex: 1; }
.gh-sel {
  position: absolute;
  top: 28px;
  left: 4px;
  right: 5px;
  height: 23px;
  background: #f6f8fa;
  border: 1px solid #dde2e7;
  border-radius: 4px;
  display: flex;
  justify-content: flex-end;
}
.state .gh-sel { left: -6px; }
.gh-sel i { flex: 1; }
.gh-caret {
  width: 29px;
  border-left: 1px solid #d3d7db;
  display: flex;
  align-items: center;
  justify-content: center;
}
.gh-al { position: absolute; left: -2px; top: 0; padding-left: 0 !important; }
.mini.tiny { position: absolute; left: 5px; top: 28px; width: 24px; height: 23px; }
.mini.tiny .ic { width: 10px; height: 10px; }

.grid-main { flex: 1; min-height: 0; display: flex; position: relative; }
.grid-rows {
  width: 930px;
  flex: none;
  overflow: hidden;
  background: #fff;
}
.data-row {
  display: grid;
  grid-template-columns: 96px 185px 199px 424px 1fr;
  border-bottom: 1px solid #d9dde0;
  overflow: hidden;
  padding-top: 7px;
  align-items: start;
}
.data-row.first { padding-top: 0; }
.data-row.first .chips { margin-top: -8px; }
.data-row.picked { background: #a9d3ee; }
.data-row .chips { white-space: nowrap; display: flex; flex-direction: column; align-items: flex-start; gap: 4px; }
.chip {
  display: inline-block;
  height: 21px;
  line-height: 19px;
  padding: 0 8px;
  border: 1px solid #dfe3e6;
  border-radius: 4px;
  background: #fff;
  color: #444;
}
.picked .chip { background: #f1f3f5; }
.shield-cell { padding-left: 46px; }
.shield { width: 26px; height: 26px; color: #333; margin-top: 0; }
.desc { align-self: end; position: relative; height: 100%; }
.desc span { position: absolute; bottom: 1px; left: 0; color: #444; line-height: 18px; }
.status {
  align-self: center;
  margin-top: -6px;
  color: #444;
  white-space: nowrap;
  position: relative;
  font-size: 13px;
  letter-spacing: -0.3px;
}
.status em { padding-left: 3px; }
.dot {
  position: absolute;
  left: -4px;
  top: -6px;
  width: 8px;
  height: 13px;
  border-radius: 50%;
  background: #ff9d00;
}
.group-row {
  display: flex;
  align-items: center;
  border-bottom: 1px solid #d9dde0;
  background: #fff;
  overflow: hidden;
  padding: 2px 0 0 22px;
  position: relative;
}
.group-row b { margin-left: 7px; color: #444; font-weight: 700; }
.toggle.cut { position: absolute; left: -7px; top: 11px; margin: 0; width: 14px; height: 14px; }
.grid-v { right: 7px; width: 6px; }
.grid-v .thumb { top: 88px; height: 607px; background: #8f989e; }
.grid-v .arr.up { top: 11px; }
.grid-v .arr.down { bottom: 13px; }
.hscroll {
  height: 19px;
  flex: none;
  position: relative;
  background: #fff;
  border-bottom: 1px solid #c9ced2;
}
.hthumb {
  position: absolute;
  left: 32px;
  width: 619px;
  top: 6px;
  height: 6px;
  border-radius: 3px;
  background: #8f989e;
}

/* detail */
.detail {
  flex: 1;
  min-width: 0;
  background: #fff;
  border-left: 2px solid #8f989e;
  border-right: 1px solid #c9ced2;
  border-bottom: 1px solid #c9ced2;
  display: flex;
  flex-direction: column;
}
.detail-head {
  height: 48px;
  background: #e6ecf4;
  flex: none;
  display: flex;
  align-items: center;
  justify-content: space-between;
  padding: 0 12px 0 8px;
  font-size: 18px;
  color: #355f85;
}
.detail-head .ic { margin-top: -12px; color: #333; }
.detail-body { flex: 1; padding: 14px 12px 0 12px; min-height: 0; }
.acc {
  height: 40px;
  border-top: 1px solid #d9dde0;
  display: flex;
  align-items: center;
  gap: 11px;
  padding: 0 0 4px 7px;
  color: #444;
  position: relative;
}
.count {
  position: absolute;
  right: 8px;
  top: 9px;
  width: 14px;
  height: 20px;
  background: #e3e7ea;
  border-radius: 3px;
  font-style: normal;
  font-size: 12px;
  line-height: 20px;
  text-align: center;
  color: #777;
}
.from-model { display: flex; justify-content: flex-end; margin-top: 4px; position: relative; }
.btn-line {
  height: 30px;
  background: #f7f8f9;
  border: 1px solid #dde0e3;
  border-radius: 4px;
  display: flex;
  align-items: center;
  gap: 6px;
  padding: 0 8px;
  color: #444;
  white-space: nowrap;
}
.from-model .btn-line { width: 176px; margin-right: 22px; }
.info { position: absolute; right: 5px; top: -2px; color: #444; }
.frow { display: flex; justify-content: space-between; margin-top: 10px; }
.frow label { color: #aaa; padding: 5px 0 0 32px; white-space: nowrap; }
.frow label sup { font-size: 10px; line-height: 0; }
.combo {
  width: 159px;
  display: flex;
  border: 1px solid #dde0e3;
  border-radius: 4px;
  background: #fff;
  flex: none;
}
.combo-val { flex: 1; padding: 4px; display: flex; flex-direction: column; gap: 4px; align-items: flex-start; min-width: 0; }
.combo-val.plain { padding: 5px 8px; color: #444; white-space: nowrap; height: 28px; }
.combo-btn {
  width: 29px;
  border-left: 1px solid #dde0e3;
  display: flex;
  align-items: center;
  justify-content: center;
  flex: none;
}
.tag {
  height: 21px;
  padding: 0 3px 0 8px;
  border: 1px solid #dfe3e6;
  border-radius: 4px;
  display: inline-flex;
  align-items: center;
  gap: 3px;
  white-space: nowrap;
  color: #444;
  font-size: 13.2px;
}
.tag .ic { width: 11px; height: 11px; }
.f1 { margin-top: 10px; }
.f2 { margin-top: 12px; }
.f3 { margin-top: 13px; }
.f3 .combo { height: 30px; }
.f4 { margin-top: 13px; }
.f4 label { padding-top: 12px; }
.editor {
  width: 159px;
  height: 149px;
  border: 1px solid #dde0e3;
  border-radius: 4px;
  overflow: hidden;
  flex: none;
  background: #fff;
}
.ed-tools {
  height: 36px;
  background: #e6ecf4;
  display: flex;
  align-items: center;
  padding-left: 10px;
  color: #555;
}
.ed-b { font-weight: 700; width: 30px; }
.ed-i { font-style: italic; font-family: "Liberation Serif", serif; width: 24px; }
.ed-a { width: 30px; padding-left: 3px; font-size: 14px; }
.ed-a2 { width: 30px; padding-left: 4px; font-size: 12px; }
.ed-tools sup { font-size: 8px; line-height: 0; color: #4682bc; }
.sep { width: 1px; height: 30px; background: #cdd3d8; margin-right: 4px; }
.ed-tools .sep:nth-child(3) { margin-right: 6px; }
.ed-tools .ic { margin-left: 4px; }
.ed-area { position: relative; height: 112px; }
.ed-area .arr.up { right: 6px; left: auto; top: 13px; }
.ed-area .arr.down { right: 6px; left: auto; bottom: 12px; }
.risk-row { display: flex; align-items: center; justify-content: flex-end; margin-top: 13px; }
.risk-btn {
  width: 101px;
  height: 29px;
  background: #fdfdfd;
  border: 1px solid #e8eaec;
  border-radius: 4px;
  display: flex;
  align-items: center;
  gap: 6px;
  padding: 0 7px;
  color: #c0c3c6;
  white-space: nowrap;
  font-size: 13px;
}
.risk-btn .ic { color: #aeb2b6; }
.risk-link { width: 10px; height: 1px; background: #e2e4e6; }
.risk-val {
  width: 26px;
  height: 28px;
  background: #e2e6ea;
  border-radius: 3px;
  text-align: center;
  line-height: 26px;
  font-weight: 700;
}
.how { color: #a5a8ab; margin: 8px 0 0 32px; line-height: 18px; white-space: nowrap; font-size: 13px; }
.how-boxes { display: flex; gap: 9px; margin: 10px 0 0 32px; }
.how-a {
  width: 115px;
  height: 140px;
  border: 1px solid #dfe2e5;
  border-radius: 4px;
  display: flex;
  padding: 2px 4px;
  gap: 5px;
  line-height: 18.6px;
  color: #444;
  white-space: nowrap;
}
.cb {
  width: 16px;
  height: 16px;
  border: 1px solid #d9dcdf;
  border-radius: 3px;
  flex: none;
  background: #fafafa;
  margin-top: 3px;
}
.inl { vertical-align: -2px; }
.how-b {
  width: 192px;
  height: 140px;
  border: 1px solid #dfe2e5;
  border-radius: 4px;
  text-align: center;
  padding: 10px 10px 0;
  color: #444;
  line-height: 19px;
}
.misura {
  margin: 12px auto 0;
  width: 82px;
  height: 30px;
  background: #33c992;
  border: 1px solid #1fae7c;
  border-radius: 3px;
  color: #e8f8f2;
  display: flex;
  align-items: center;
  justify-content: center;
  gap: 5px;
  padding: 0;
}
.save-row {
  margin-top: 8px;
  border-top: 1px solid #d9dde0;
  padding-top: 8px;
  display: flex;
  justify-content: flex-end;
}
.save-row .btn-line { width: 137px; }

/* right */
.right-col {
  margin-left: 12px;
  width: 246px;
  flex: none;
  display: flex;
  flex-direction: column;
  position: relative;
  background: #fff;
  border-bottom: 1px solid #c9ced2;
  border-right: 1px solid #c9ced2;
  border-left: 1px solid #c9ced2;
}
.right-col::before {
  content: "";
  position: absolute;
  left: -6px;
  top: 0;
  bottom: 0;
  width: 2px;
  background: #8f989e;
}
.right-col .side-tools { height: 39px; padding: 0 8px 2px; }
.empty {
  flex: 1;
  display: flex;
  flex-direction: column;
  align-items: center;
  padding-top: 340px;
  text-align: center;
  color: #a7abaf;
}
.empty .ic { color: #c4c8cc; }
.empty h4 { font-size: 22.2px; line-height: 32px; margin-top: 18px; font-weight: 400; color: #a2a6a9; }
.empty p { margin-top: 15px; font-size: 13.33px; color: #b6babd; }

/* modal */
.scrim {
  position: absolute;
  left: 0;
  right: 0;
  top: 80px;
  bottom: 0;
  background: rgba(70, 78, 90, 0.43);
}
.modal {
  position: absolute;
  left: 695px;
  top: 214px;
  width: 532px;
  height: 687px;
  background: #fff;
  border: 1px solid #1b5a93;
  display: flex;
  flex-direction: column;
}
.modal-title {
  height: 23px;
  flex: none;
  background: #4682bc;
  color: #fff;
  display: flex;
  align-items: center;
  justify-content: center;
  padding-right: 18px;
  position: relative;
  border-bottom: 1px solid #1b5a93;
}
.modal-q { position: absolute; right: 29px; top: -1px; font-weight: 700; font-size: 15px; }
.modal-title .ic { position: absolute; right: 5px; top: 5px; width: 11px; height: 11px; }
.modal-body { flex: 1; padding: 11px 13px 0 11px; min-height: 0; }
.risk-card {
  height: 592px;
  border: 1px solid #e6ecf4;
  border-radius: 5px;
  overflow: hidden;
  position: relative;
}
.risk-head {
  height: 35px;
  background: #e6ecf4;
  color: #3d77ad;
  font-weight: 700;
  padding-left: 8px;
  line-height: 37px;
}
.risk-tree { position: relative; height: 430px; }
.tree-lines { position: absolute; left: 0; top: 0; }
.ln { fill: none; stroke: #e4e6e8; stroke-width: 1; }
.ln.dark { stroke: #444; }
.col-h {
  position: absolute;
  top: 12px;
  height: 20px;
  line-height: 20px;
  color: #a8a8a8;
  overflow: hidden;
  white-space: nowrap;
}
.prob-h { position: absolute; top: 37px; line-height: 20px; color: #444; }
.prob-h.on { font-weight: 700; }
.node { position: absolute; height: 20px; line-height: 20px; white-space: nowrap; color: #444; }
.node.on { font-weight: 700; }
.matrix {
  position: absolute;
  left: 403px;
  top: 59px;
  display: grid;
  grid-template-columns: repeat(3, 28px);
  grid-auto-rows: 28px;
  column-gap: 4px;
  row-gap: 6px;
}
.cell {
  border-radius: 4px;
  display: flex;
  align-items: center;
  justify-content: center;
  font-weight: 600;
  font-size: 12.500px;
}
.cell.none { background: #f0f3f6; color: #a8afb5; }
.cell.low { background: rgba(255, 216, 90, 0.75); color: #b4ab83; }
.cell.mid { background: #ffcc80; color: #fff; }
.cell.high { background: #f4a49c; color: #fff; }
.cell.hot { background: #ff9800; color: #fff; }
.motive-label { display: block; padding-left: 8px; color: #a8a8a8; line-height: 20px; margin-top: 9px; }
.motive { margin: 1px 8px 0 8px; height: 87px; border: 1px solid #dfe3e6; border-radius: 4px; }
.modal-foot {
  height: 47px;
  flex: none;
  background: #e6ecf4;
  border-top: 1px solid #dce3ec;
  display: flex;
  align-items: center;
  padding: 1px 12px 0 11px;
  gap: 9px;
}
.foot-btn {
  height: 29px;
  background: #fff;
  border: 1px solid #e0e5ea;
  border-radius: 4px;
  display: flex;
  align-items: center;
  gap: 6px;
  padding: 0 8px;
  color: #444;
  white-space: nowrap;
}
.foot-btn:first-child { width: 184px; margin-right: auto; }
.foot-btn.ok { width: 100px; height: 30px; background: #23c48c; border-color: #17a876; color: #fff; }
.foot-btn.close { width: 76px; }
</style>
